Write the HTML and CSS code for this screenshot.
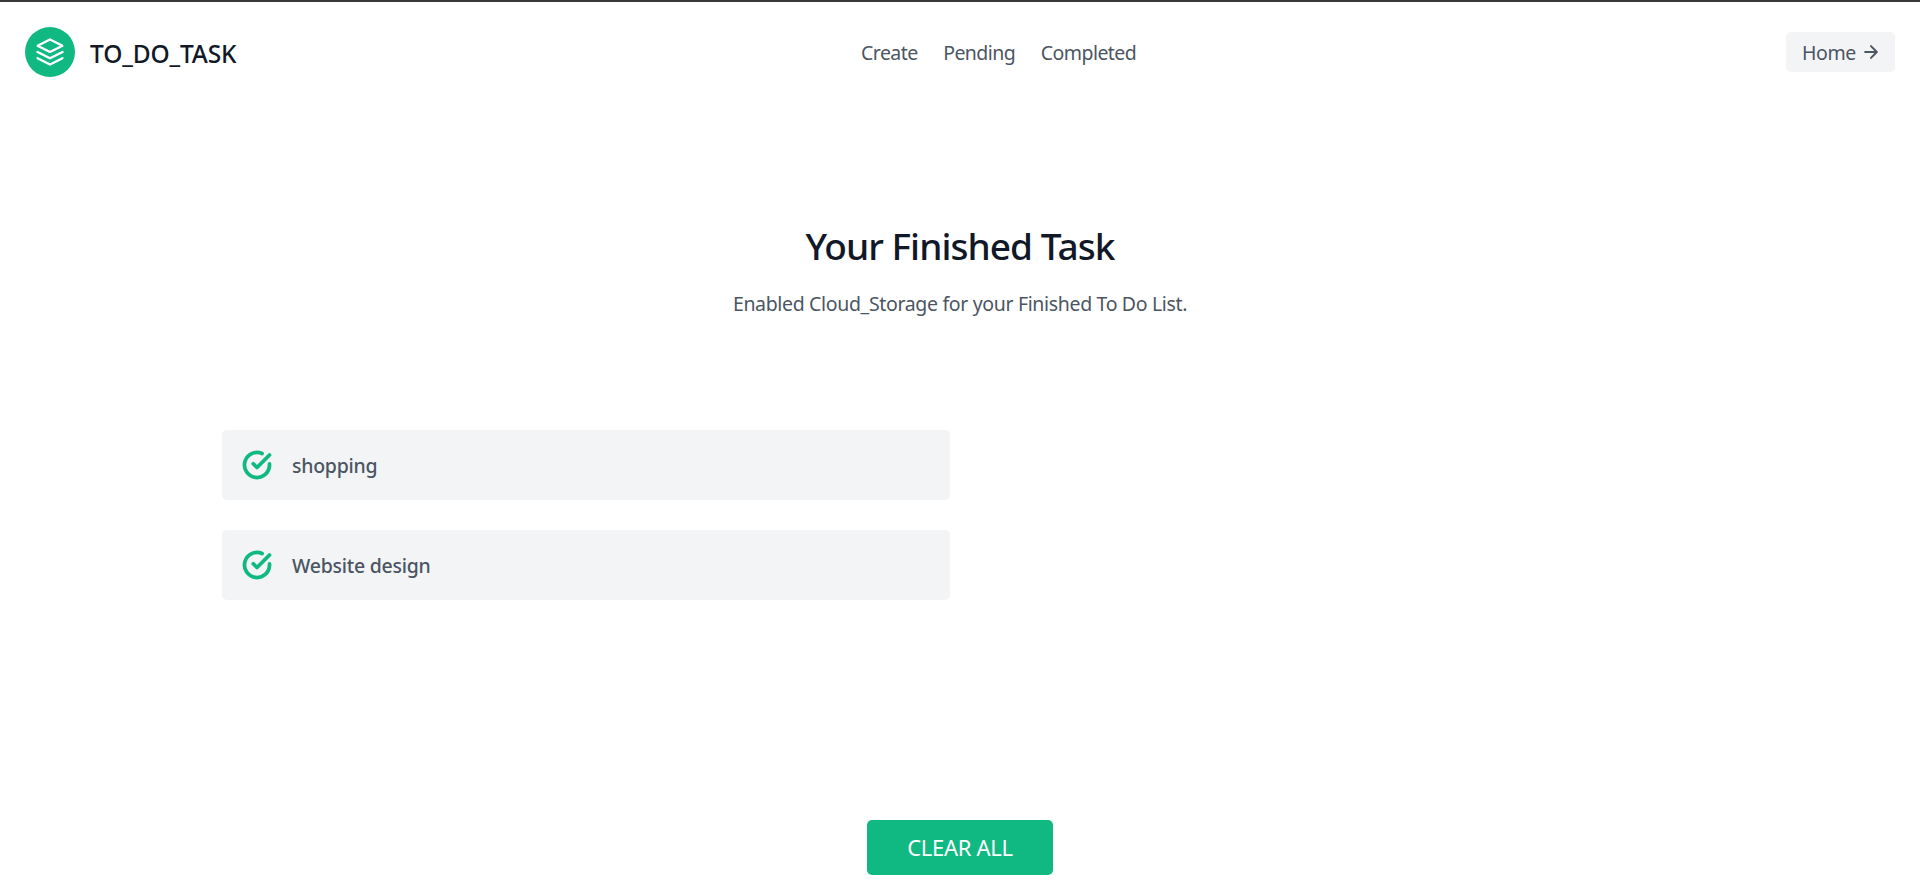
FILE: index.html
```html
<!DOCTYPE html>
<html lang="en">
<head>
<meta charset="utf-8">
<title>TO_DO_TASK</title>
<link rel="stylesheet" href="styles.css">
</head>
<body>
<header class="header">
  <a class="brand">
    <svg class="logo" viewBox="0 0 24 24"><path d="M12 2L2 7l10 5 10-5-10-5zM2 17l10 5 10-5M2 12l10 5 10-5"/></svg>
    <span class="brand-name">TO_DO_TASK</span>
  </a>
  <nav class="nav">
    <a>Create</a>
    <a>Pending</a>
    <a>Completed</a>
  </nav>
  <button class="home"><span>Home</span>
    <svg class="arrow" viewBox="0 0 24 24"><path d="M5 12h14M12 5l7 7-7 7"/></svg>
  </button>
</header>
<main class="content">
  <div class="intro">
    <h1 class="title">Your Finished Task</h1>
    <p class="subtitle">Enabled Cloud_Storage for your Finished To Do List.</p>
  </div>
  <div class="tasks">
    <div class="task">
      <svg class="check" viewBox="0 0 24 24"><path d="M22 11.08V12a10 10 0 11-5.93-9.14"/><path d="M22 4L12 14.01l-3-3"/></svg>
      <span>shopping</span>
    </div>
    <div class="task">
      <svg class="check" viewBox="0 0 24 24"><path d="M22 11.08V12a10 10 0 11-5.93-9.14"/><path d="M22 4L12 14.01l-3-3"/></svg>
      <span>Website design</span>
    </div>
  </div>
  <button class="clear"><span>CLEAR ALL</span></button>
</main>
</body>
</html>
```
FILE: styles.css
```css
* { box-sizing: border-box; margin: 0; }
body {
  height: 887px;
  overflow: hidden;
  border-top: 2px solid #3b3839;
  background: #fff;
  color: #4b5563;
  font-family: "Noto Sans", "Open Sans", sans-serif;
  font-size: 19.5px;
  line-height: 30px;
  white-space: nowrap;
}
button { border: 0; font: inherit; color: inherit; }
svg { flex: none; fill: none; stroke: currentColor; stroke-linecap: round; stroke-linejoin: round; stroke-width: 2; }
.header { display: flex; align-items: center; height: 100px; padding: 0 25px; }
.brand { display: flex; align-items: center; width: 836px; }
.logo { width: 50px; height: 50px; padding: 10px; border-radius: 50%; background: #10b981; color: #fff; }
.brand-name { margin: 3px 0 0 15px; color: #111827; font-size: 24.5px; font-weight: 500; letter-spacing: -0.15px; }
.nav { display: flex; gap: 25.5px; margin-top: 1px; letter-spacing: -0.55px; }
.home { display: flex; align-items: center; gap: 5px; width: 109px; height: 40px; margin-left: auto; padding: 0 15px; border-radius: 5px; background: #f3f4f6; letter-spacing: -0.4px; }
.home span { margin: 1px 0 0 1px; }
.arrow { width: 20px; height: 20px; stroke-width: 2.4; }
.content { display: flex; flex-direction: column; align-items: center; height: 785px; padding-top: 119px; }
.intro { height: 209px; text-align: center; }
.title { color: #111827; font-size: 37px; font-weight: 500; line-height: 50px; letter-spacing: -0.95px; }
.subtitle { margin-top: 18px; letter-spacing: -0.34px; }
.tasks { display: grid; grid-template-columns: 728px; gap: 30px; width: 1476px; }
.task { display: flex; align-items: center; height: 70px; padding: 0 20px; border-radius: 5px; background: #f3f4f6; font-weight: 500; letter-spacing: -0.25px; }
.check { width: 30px; height: 30px; margin-right: 20px; color: #10b981; stroke-width: 3; }
.task span { margin-top: 2px; }
.clear { width: 186px; height: 55px; margin-top: 220px; padding-bottom: 3px; border-radius: 5px; background: #10b981; color: #fff; font-size: 22px; letter-spacing: -0.3px; }
```
